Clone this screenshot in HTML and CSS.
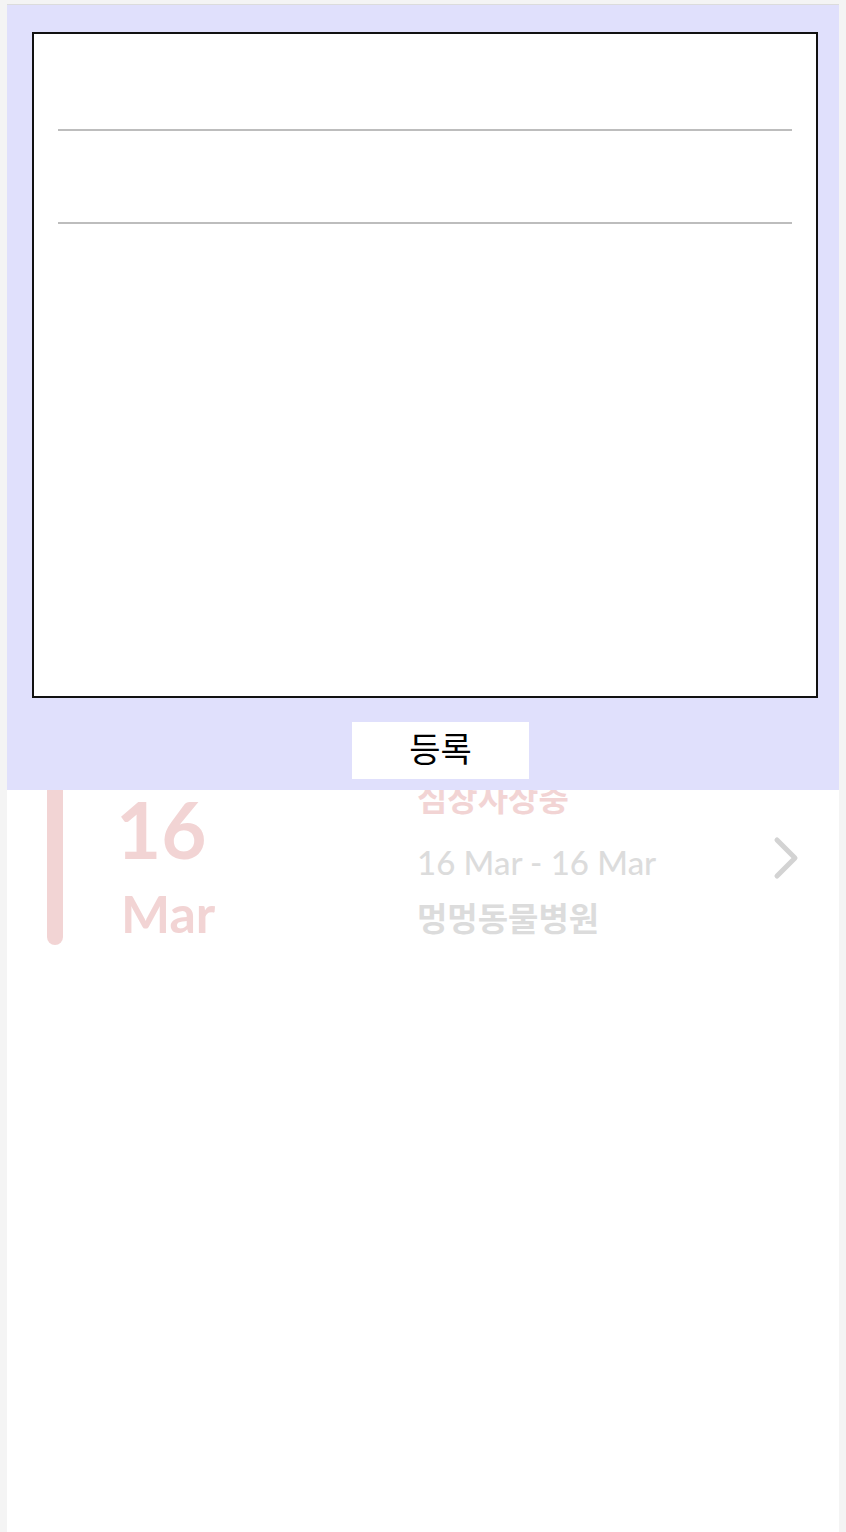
FILE: index.html
```html
<!DOCTYPE html>
<html lang="ko">
<head>
<meta charset="utf-8">
<title>일정 등록</title>
<link rel="stylesheet" href="styles.css">
</head>
<body>
<div class="app">
  <div class="list">
    <div class="item">
      <div class="bar"></div>
      <div class="date">
        <div class="day">16</div>
        <div class="month">Mar</div>
      </div>
      <div class="info">
        <div class="title">심장사상충</div>
        <div class="range">16 Mar - 16 Mar</div>
        <div class="place">멍멍동물병원</div>
      </div>
      <svg class="chevron" width="30" height="46" viewBox="0 0 30 46">
        <polyline points="5,5 23,23 5,41" fill="none" stroke="#d3d3d3" stroke-width="5" stroke-linecap="round" stroke-linejoin="round"/>
      </svg>
    </div>
  </div>
  <div class="modal">
    <div class="form">
      <div class="field"></div>
      <div class="field second"></div>
    </div>
    <div class="actions">
      <button class="submit" type="button">등록</button>
    </div>
  </div>
</div>
</body>
</html>
```
FILE: styles.css
```css
html, body {
  margin: 0;
  padding: 0;
  background: #f4f4f4;
}

.app {
  position: relative;
  margin: 4px 7px 0;
  border-top: 1px solid #dcdcdc;
  background: #fff;
  min-height: 1527px;
  font-family: Lato, "Noto Sans CJK KR", sans-serif;
}

.list {
  padding-top: 755px;
}

.item {
  display: flex;
  align-items: flex-start;
  padding-left: 40px;
}

.bar {
  width: 16px;
  height: 185px;
  border-radius: 8px;
  background: #f2d4d4;
  flex-shrink: 0;
}

.date {
  width: 301px;
  margin-left: 53px;
  padding-top: 30px;
  color: #f2d4d4;
  font-weight: 700;
}

.day {
  font-size: 78px;
  line-height: 78px;
}

.month {
  margin-top: 19px;
  padding-left: 5px;
  font-size: 52px;
  line-height: 52px;
}

.info {
  flex: 1;
  padding-top: 17px;
}

.title {
  color: #f2d4d4;
  font-size: 33px;
  font-weight: 700;
  line-height: 40px;
  font-family: "Noto Sans CJK KR", sans-serif;
}

.range {
  margin-top: 25px;
  color: #dcdcdc;
  font-size: 33px;
  font-weight: 500;
  line-height: 40px;
}

.place {
  margin-top: 15px;
  color: #dcdcdc;
  font-size: 33px;
  font-weight: 700;
  line-height: 40px;
  font-family: "Noto Sans CJK KR", sans-serif;
}

.chevron {
  margin-top: 75px;
  margin-right: 37px;
  flex-shrink: 0;
}

.modal {
  position: absolute;
  top: 0;
  left: 0;
  right: 0;
  height: 785px;
  background: #e0e0fc;
  display: flex;
  flex-direction: column;
}

.form {
  margin: 27px 21px 0 25px;
  height: 662px;
  border: 2px solid #111;
  background: #fff;
  padding: 0 24px;
}

.field {
  height: 95px;
  border-bottom: 2px solid #bdbdbd;
}

.field.second {
  height: 91px;
}

.actions {
  display: flex;
  margin-top: 24px;
  padding-left: 345px;
}

.submit {
  width: 177px;
  height: 57px;
  border: none;
  background: #fff;
  color: #000;
  font-family: "Noto Sans CJK KR", sans-serif;
  font-size: 34px;
  font-weight: 400;
  padding: 0 0 6px 0;
}
```
